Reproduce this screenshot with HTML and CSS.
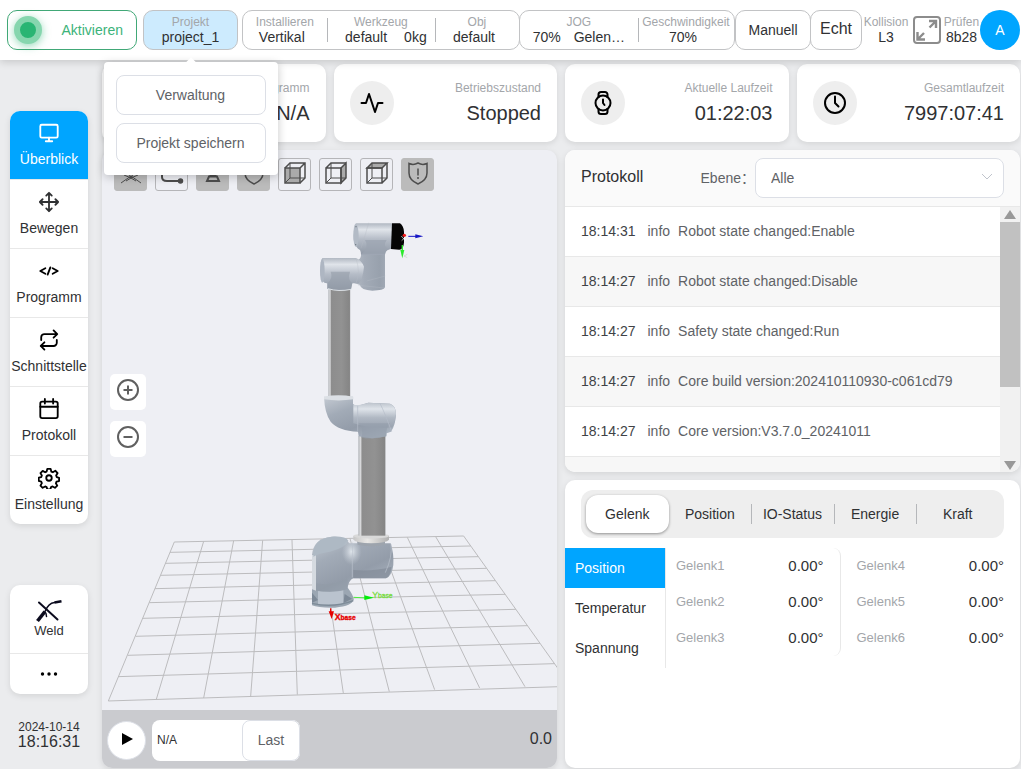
FILE: index.html
```html
<!DOCTYPE html>
<html lang="de">
<head>
<meta charset="utf-8">
<meta name="viewport" content="width=device-width, initial-scale=1">
<title>Roboter – Überblick</title>
<link rel="stylesheet" href="styles.css">
</head>
<body>
<header class="topbar">
  <button class="enable-btn" type="button"><span class="lamp"></span><span class="enable-text">Aktivieren</span></button>
  <div class="project">
    <button class="box project-btn" type="button" aria-expanded="true"><span class="label">Projekt</span><span class="value">project_1</span></button>
    <div class="popover">
      <button class="popover-btn" type="button">Verwaltung</button>
      <button class="popover-btn" type="button">Projekt speichern</button>
    </div>
  </div>
  <div class="box group group-setup">
    <div class="cell"><span class="label">Installieren</span><span class="value value-left">Vertikal</span></div>
    <div class="cell cell-wide"><span class="label">Werkzeug</span><span class="value pair pair-tool"><span>default</span><span>0kg</span></span></div>
    <div class="cell"><span class="label">Obj</span><span class="value value-left">default</span></div>
  </div>
  <div class="box group group-jog">
    <div class="cell cell-wide"><span class="label">JOG</span><span class="value pair pair-tight"><span>70%</span><span>Gelen…</span></span></div>
    <div class="cell cell-speed"><span class="label">Geschwindigkeit</span><span class="value value-left">70%</span></div>
  </div>
  <button class="box mode-btn" type="button">Manuell</button>
  <button class="box real-btn" type="button">Echt</button>
  <div class="cell status"><span class="label">Kollision</span><span class="value">L3</span></div>
  <button class="expand-btn" type="button" aria-label="Vollbild">
    <svg viewBox="0 0 30 30" width="30" height="30" fill="none" stroke="#8c8c8c" stroke-width="2"><rect x="2" y="2" width="26" height="26" rx="3"/><path d="M17.500 12.500 23.500 6.500M17 6h7v7M12 18l-6.500 6.500M5.500 17v7.500h7.500" stroke-width="2.400"/></svg>
  </button>
  <div class="cell check"><span class="label">Prüfen</span><span class="value">8b28</span></div>
  <button class="avatar" type="button">A</button>
</header>

<div class="layout">
  <aside class="sidebar">
    <nav class="nav card">
      <a class="nav-item active" href="#"><svg class="ico" viewBox="0 0 24 24"><rect x="2.500" y="3" width="19" height="14" rx="1.500"/><path d="M12 17v4M8.500 21h7"/></svg><span>Überblick</span></a>
      <a class="nav-item" href="#"><svg class="ico soft" viewBox="0 0 24 24"><path d="M12 2v20M2 12h20M9 5l3-3 3 3M9 19l3 3 3-3M5 9l-3 3 3 3M19 9l3 3-3 3"/></svg><span>Bewegen</span></a>
      <a class="nav-item" href="#"><svg class="ico" viewBox="0 0 24 24"><path d="M8 9l-5.500 3L8 15M16 9l5.500 3-5.500 3M13.500 8l-3 8"/></svg><span>Programm</span></a>
      <a class="nav-item" href="#"><svg class="ico" viewBox="0 0 24 24"><path d="M17 1.500l4 4-4 4M3.500 12V9a3.500 3.500 0 0 1 3.500-3.500h14M7 22.500l-4-4 4-4M20.500 12v3a3.500 3.500 0 0 1-3.500 3.500H3"/></svg><span>Schnittstelle</span></a>
      <a class="nav-item" href="#"><svg class="ico" viewBox="0 0 24 24"><rect x="2.500" y="4" width="19" height="18" rx="2"/><path d="M7.500 1v5M16.500 1v5M2.500 9.500h19"/></svg><span>Protokoll</span></a>
      <a class="nav-item" href="#"><svg class="ico" viewBox="0 0 24 24"><circle cx="12" cy="12" r="3"/><path d="M10.200 2h3.600l.7 3 1.700.7 2.700-1.600 2.500 2.500-1.600 2.700.7 1.700 2.500.8v3.500l-2.800.7-.7 1.700 1.500 2.600-2.500 2.400-2.600-1.500-1.700.7-.7 2.600h-3.300l-.8-2.600-1.600-.7-2.700 1.500-2.400-2.400 1.500-2.700-.7-1.600-2.700-.8v-3.500l2.700-.7.7-1.700-1.500-2.600 2.400-2.500 2.700 1.500 1.600-.7z"/></svg><span>Einstellung</span></a>
    </nav>
    <div class="plugins card">
      <a class="plugin" href="#"><svg viewBox="0 0 28 24" width="28" height="24" fill="none" stroke="#0b0b1e" stroke-linecap="round"><path d="M4 3.500l18.500 17" stroke-width="2"/><path d="M2.500 22 10 12.500" stroke-width="3.600" stroke-linecap="butt"/><path d="M10 12.500C12 7.500 15 4 19.500 3.500" stroke-width="1.500"/><path d="M19.500 3.500l7-1.200" stroke-width="2.600" stroke-linecap="butt"/><path d="M11.500 17.500l-.5-3" stroke-width="1.500"/></svg><span>Weld</span></a>
      <button class="more" type="button" aria-label="Mehr"><svg viewBox="0 0 18 4" width="18" height="4"><circle cx="2.500" cy="2" r="1.700"/><circle cx="9" cy="2" r="1.700"/><circle cx="15.500" cy="2" r="1.700"/></svg></button>
    </div>
    <div class="clock"><span class="date">2024-10-14</span><span class="time">18:16:31</span></div>
  </aside>

  <main class="content">
    <section class="stats">
      <div class="stat card"><span class="stat-icon"></span><div class="stat-text"><span class="label">Programm</span><span class="stat-value">N/A</span></div></div>
      <div class="stat card"><span class="stat-icon"><svg class="ico" viewBox="0 0 24 24"><path d="M1.500 12H6l3-9 6 18 3-9h4.500"/></svg></span><div class="stat-text"><span class="label">Betriebszustand</span><span class="stat-value">Stopped</span></div></div>
      <div class="stat card"><span class="stat-icon"><svg class="ico" viewBox="0 0 24 24"><circle cx="12" cy="12" r="7.500"/><path d="M12 8.500V12l1.500 2M7.500 6V3.500a2.500 2.500 0 0 1 2.500-2.500h4a2.500 2.500 0 0 1 2.500 2.500V6M7.500 18v2.500a2.500 2.500 0 0 0 2.500 2.500h4a2.500 2.500 0 0 0 2.500-2.500V18"/></svg></span><div class="stat-text"><span class="label">Aktuelle Laufzeit</span><span class="stat-value">01:22:03</span></div></div>
      <div class="stat card"><span class="stat-icon"><svg class="ico" viewBox="0 0 24 24"><circle cx="12" cy="12" r="10"/><path d="M12 5.500V12l3.500 3.500"/></svg></span><div class="stat-text"><span class="label">Gesamtlaufzeit</span><span class="stat-value">7997:07:41</span></div></div>
    </section>

    <section class="panels">
      <div class="viewer card">
        <div class="stage">
          <svg class="scene" viewBox="102 150 455 560" preserveAspectRatio="xMidYMid slice" role="img" aria-label="Roboterarm">
            <defs>
              <linearGradient id="cyl" x1="0" y1="0" x2="0" y2="1"><stop offset="0" stop-color="#b1b8c2"/><stop offset=".2" stop-color="#e0e4ea"/><stop offset=".5" stop-color="#b5bcc7"/><stop offset="1" stop-color="#8f98a5"/></linearGradient>
              <linearGradient id="post" x1="0" y1="0" x2="1" y2="0"><stop offset="0" stop-color="#b3bac4"/><stop offset=".3" stop-color="#a3abb7"/><stop offset=".7" stop-color="#98a1ad"/><stop offset="1" stop-color="#a8b0bc"/></linearGradient>
              <linearGradient id="tube" x1="0" y1="0" x2="1" y2="0"><stop offset="0" stop-color="#b2b5b9"/><stop offset=".08" stop-color="#d8d9db"/><stop offset=".14" stop-color="#8d8d8d"/><stop offset=".6" stop-color="#929292"/><stop offset=".96" stop-color="#858585"/><stop offset="1" stop-color="#b4b6b9"/></linearGradient>
              <linearGradient id="bend" x1="0" y1="0" x2=".7" y2="1"><stop offset="0" stop-color="#c5cbd3"/><stop offset=".35" stop-color="#a2abb7"/><stop offset=".7" stop-color="#939ca9"/><stop offset="1" stop-color="#a9b3bf"/></linearGradient>
              <linearGradient id="ring" x1="0" y1="0" x2="1" y2="0"><stop offset="0" stop-color="#c7c7c7"/><stop offset=".4" stop-color="#e9e8e6"/><stop offset="1" stop-color="#b0b0b0"/></linearGradient>
              <linearGradient id="sleeve" x1="0" y1="0" x2="0" y2="1"><stop offset="0" stop-color="#bcc3cc"/><stop offset=".25" stop-color="#dfe4ea"/><stop offset=".6" stop-color="#b0b8c3"/><stop offset="1" stop-color="#99a2af"/></linearGradient>
              <radialGradient id="shine"><stop offset="0" stop-color="#e2e8ee"/><stop offset="1" stop-color="#c5ccd5" stop-opacity="0"/></radialGradient>
            </defs>
            <g transform="translate(100 520) scale(.3333)" fill="none" stroke="#bcbcbe" stroke-width="3">
              <path d="M223 66 25 543M311 64 169 538M401 62 311 534M488 61 452 529M576 59 592 524M663 57 730 519M750 55 868 515M837 53 1004 509M922 52 1139 504M1007 50 1275 500M1091 48 1412 499"/>
              <path d="M223 66 1091 48M210 97 1112 78M196 130 1135 110M182 166 1160 145M165 206 1186 182M148 248 1216 223M128 295 1248 268M107 349 1283 317M83 406 1320 370M54 470 1364 431M25 543 1412 499"/>
            </g>
            <g transform="translate(290 390) scale(.3333)">
              <path d="M66 600 172 592 Q190 615 191 628 Q188 648 135 653 Q85 654 66 646Z" fill="#9ba6b2"/>
              <path d="M66 608 84 630 66 638ZM164 612 186 626 160 640Z" fill="#7d8997"/>
              <path d="M84 600H160V640Q120 650 84 642Z" fill="#bac3ce"/>
              <path d="M66 640Q130 655 190 632" fill="none" stroke="#7d8b98" stroke-width="4"/>
              <path d="M175 460H302Q312 490 310 525Q306 558 288 565H190Q176 570 172 598Q130 610 66 600V495Q70 445 125 440Q165 438 178 460Z" fill="url(#bend)"/>
              <path d="M66 495H78V602L66 598Z" fill="#d5dae0"/>
              <path d="M78 602Q130 612 172 598V565Q130 590 78 580Z" fill="#919ba7" opacity=".6"/>
              <path d="M70 500Q67 445 125 440 168 438 175 452 168 472 120 485 85 490 70 500Z" fill="#aeb9c4"/>
              <path d="M190 540Q250 545 305 530 300 562 288 565H190Z" fill="#838c98" opacity=".7"/>
              <ellipse cx="185" cy="485" rx="30" ry="40" fill="url(#shine)"/>
              <path d="M187 458V562M303 462Q308 500 286 548" fill="none" stroke="#b9c1cb" stroke-width="2"/>
              <path d="M200 450H285V465Q245 474 203 464Z" fill="#9da4ad"/>
              <path d="M190 437H297V449Q290 459 244 460 198 459 190 449Z" fill="url(#ring)"/>
              <ellipse cx="244" cy="438" rx="53" ry="8" fill="#d9d9d9"/>
              <rect x="205" y="138" width="82" height="299" fill="url(#tube)"/>
              <path d="M102 20H189V42Q198 50 212 45L235 38 300 41Q318 47 318 72 316 108 303 125L290 130 289 139Q246 150 206 139L204 125Q145 122 122 95 104 70 102 20Z" fill="url(#bend)"/>
              <path d="M190 44Q205 48 235 38L300 41Q318 47 318 72 316 92 308 112 250 118 190 100Z" fill="url(#sleeve)"/>
              <path d="M215 143Q222 115 205 100H300Q287 115 289 139Q250 150 215 143Z" fill="#929caa" opacity=".6"/>
              <path d="M203 48V124M270 40Q285 70 305 125" fill="none" stroke="#b5bdc8" stroke-width="2"/>
              <path d="M191 622 228 624" stroke="#4bef3d" stroke-width="3"/><path d="M223 616 252 623 223 630Z" fill="#00ed08"/>
              <path d="M122 655V668" stroke="#e00" stroke-width="4"/><path d="M116 664H132L125 687Z" fill="#e60000"/>
              <text class="axis axis-x" x="134" y="690">X<tspan class="sub">base</tspan></text>
              <text class="axis axis-y" x="247" y="625">Y<tspan class="sub">base</tspan></text>
            </g>
            <g transform="translate(290 200) scale(.3333)">
              <rect x="115" y="268" width="66" height="322" fill="url(#tube)"/>
              <path d="M102 590Q145 582 190 590V598Q145 605 102 598Z" fill="#dce0e5"/>
              <path d="M215 140 204 100H303L300 147Q287 148 285 160V262Q282 272 247 272 212 270 210 255L190 248V182Q210 184 213 168Z" fill="url(#post)"/>
              <path d="M97 174H198Q214 180 222 200 218 240 206 250H187L183 268Q148 274 112 266V250Q96 252 92 225 88 185 97 174Z" fill="url(#cyl)"/>
              <path d="M112 250Q130 235 122 215H180Q172 240 187 250L183 268Q148 274 112 266Z" fill="#949da9" opacity=".6"/>
              <ellipse cx="97" cy="212" rx="7" ry="36" fill="#aeb6c2"/>
              <path d="M198 70H306V147H300Q285 150 285 164H213Q213 148 204 146 190 134 190 105 190 74 198 70Z" fill="url(#cyl)"/>
              <path d="M213 164Q240 140 225 120H290Q275 140 300 148 287 150 285 164Z" fill="#9ba4b0" opacity=".7"/>
              <ellipse cx="198" cy="107" rx="8" ry="34" fill="#b3bbc6"/><circle cx="198" cy="80" r="2" fill="#6a727c"/><circle cx="197" cy="134" r="2" fill="#6a727c"/>
              <path d="M236 68Q225 110 213 145M198 176Q212 215 198 250M230 243 286 228M213 163H284M205 256 283 264" fill="none" stroke="#b5bcc6" stroke-width="1"/>
              <path d="M114 266Q145 276 184 268" fill="none" stroke="#dce1e6" stroke-width="3"/>
              <path d="M306 70H330Q341 78 342 95V128Q340 148 328 149L303 147Z" fill="#050505"/>
              <path d="M355 109H380" stroke="#1414c8" stroke-width="3"/><path d="M376 103 400 109 376 115Z" fill="#1717c4"/>
              <path d="M337 135V155" stroke="#2bea2b" stroke-width="4"/><path d="M331 150H343L337 175Z" fill="#2bea2b"/>
              <circle cx="343" cy="106" r="5" fill="#f01818"/><path d="M334 108 346 122M345 112 335 122" stroke="#fff" stroke-width="2"/><path d="M352 163 342 168 352 173" fill="none" stroke="#c5d2c5" stroke-width="2"/>
            </g>
          </svg>
          <div class="tools">
            <button class="tool on" type="button" aria-label="Raster"><svg class="thin" viewBox="0 0 24 24"><path d="M2 22 12 15l10 7M5 14l7 3 7-3M9 11l3 6 3-6M7 20l5-3 5 3"/></svg></button>
            <button class="tool" type="button" aria-label="Bahn"><svg viewBox="0 0 24 24"><path d="M2 8v8q0 4 5 4h14" stroke-width="2"/><circle cx="20.500" cy="20" r="2" fill="#4d4d4d"/></svg></button>
            <button class="tool on" type="button" aria-label="Modell"><svg viewBox="0 0 24 24"><path d="M8 5h8v6l-2 4h-4l-2-4zM8 15.500h8l2 4.500H6z" stroke-width="2"/></svg></button>
            <button class="tool on" type="button" aria-label="Sicherheit"><svg viewBox="0 0 24 24"><path d="M12 2l9 4v6q0 7-9 11-9-4-9-11V6z"/></svg></button>
            <button class="tool" type="button" aria-label="Vorderansicht"><svg viewBox="0 0 24 24"><path d="M2 7h15v15H2z" fill="#aaa"/><path d="M2 7l5-5h15v15l-5 5M17 7l5-5"/><path class="thin" d="M7 2v15h15M2 22l5-5"/></svg></button>
            <button class="tool" type="button" aria-label="Seitenansicht"><svg viewBox="0 0 24 24"><path d="M17 7l5-5v15l-5 5z" fill="#aaa"/><path d="M2 7h15v15H2zM2 7l5-5h15"/><path class="thin" d="M7 2v15h15M2 22l5-5"/></svg></button>
            <button class="tool" type="button" aria-label="Draufsicht"><svg viewBox="0 0 24 24"><path d="M2 7l5-5h15l-5 5z" fill="#aaa"/><path d="M2 7h15v15H2zM22 2v15l-5 5"/><path class="thin" d="M7 2v15h15M2 22l5-5"/></svg></button>
            <button class="tool on" type="button" aria-label="Warnung"><svg viewBox="0 0 24 24"><path d="M3 2.500q4.500 2 9-.5 4.500 2.500 9 .5V12q0 7-9 11-9-4-9-11zM12 7.500v7M12 16v2"/></svg></button>
          </div>
          <div class="zoomers">
            <button class="zoom-btn" type="button" aria-label="Vergrößern"><svg viewBox="0 0 24 24"><circle cx="12" cy="12" r="10"/><path d="M12 7.500v9M7.500 12h9"/></svg></button>
            <button class="zoom-btn" type="button" aria-label="Verkleinern"><svg viewBox="0 0 24 24"><circle cx="12" cy="12" r="10"/><path d="M7.500 12h9"/></svg></button>
          </div>
        </div>
        <div class="player">
          <button class="play" type="button" aria-label="Start"><svg viewBox="0 0 12 12" width="12" height="12"><path d="M1 0 12 6 1 12z"/></svg></button>
          <div class="program"><span class="program-name">N/A</span><button class="last-btn" type="button">Last</button></div>
          <span class="elapsed">0.0</span>
        </div>
      </div>

      <div class="side">
        <section class="log card">
          <div class="log-head">
            <h2 class="log-title">Protokoll</h2>
            <label class="log-label" for="level">Ebene：</label>
            <div class="select-wrap">
              <select id="level" class="select"><option>Alle</option></select>
              <svg class="chevron" viewBox="0 0 12 8" width="12" height="8" fill="none" stroke="#c0c4cc"><path d="M1 1l5 5 5-5"/></svg>
            </div>
          </div>
          <div class="log-body">
            <ol class="log-list">
              <li class="log-row"><time>18:14:31</time><span class="level">info</span><span>Robot state changed:Enable</span></li>
              <li class="log-row"><time>18:14:27</time><span class="level">info</span><span>Robot state changed:Disable</span></li>
              <li class="log-row"><time>18:14:27</time><span class="level">info</span><span>Safety state changed:Run</span></li>
              <li class="log-row"><time>18:14:27</time><span class="level">info</span><span>Core build version:202410110930-c061cd79</span></li>
              <li class="log-row"><time>18:14:27</time><span class="level">info</span><span>Core version:V3.7.0_20241011</span></li>
              <li class="log-row"></li>
            </ol>
            <div class="scrollbar" aria-hidden="true">
              <svg viewBox="0 0 12 9" width="12" height="9"><path d="M6 0l6 9H0z"/></svg>
              <div class="track"><div class="thumb"></div></div>
              <svg viewBox="0 0 12 9" width="12" height="9"><path d="M0 0h12L6 9z"/></svg>
            </div>
          </div>
        </section>

        <section class="info card">
          <div class="tabs" role="tablist">
            <button class="tab current" type="button" role="tab" aria-selected="true">Gelenk</button>
            <button class="tab" type="button" role="tab">Position</button>
            <button class="tab ruled" type="button" role="tab">IO-Status</button>
            <button class="tab ruled" type="button" role="tab">Energie</button>
            <button class="tab ruled" type="button" role="tab">Kraft</button>
          </div>
          <div class="joints">
            <div class="kinds">
              <button class="kind chosen" type="button">Position</button>
              <button class="kind" type="button">Temperatur</button>
              <button class="kind" type="button">Spannung</button>
            </div>
            <dl class="values values-first">
              <div class="row"><dt>Gelenk1</dt><dd>0.00°</dd></div>
              <div class="row"><dt>Gelenk2</dt><dd>0.00°</dd></div>
              <div class="row"><dt>Gelenk3</dt><dd>0.00°</dd></div>
            </dl>
            <dl class="values">
              <div class="row"><dt>Gelenk4</dt><dd>0.00°</dd></div>
              <div class="row"><dt>Gelenk5</dt><dd>0.00°</dd></div>
              <div class="row"><dt>Gelenk6</dt><dd>0.00°</dd></div>
            </dl>
          </div>
        </section>
      </div>
    </section>
  </main>
</div>
</body>
</html>
```
FILE: styles.css
```css
* { box-sizing: border-box; }
body {
  margin: 0;
  height: 100vh;
  display: flex;
  flex-direction: column;
  overflow: hidden;
  background: #ebecee;
  color: #303133;
  font: 14px/16px "Liberation Sans", "Noto Sans CJK SC", sans-serif;
}
button, select { font: inherit; color: inherit; padding: 0; margin: 0; border: 0; background: none; }
a { color: inherit; text-decoration: none; }
svg { display: block; }
.card { background: #fff; border-radius: 10px; box-shadow: 0 2px 6px rgba(0, 0, 0, .1); }
.label { font-size: 12px; line-height: 14px; color: #a3a6aa; white-space: nowrap; }

/* Top bar */
.topbar {
  position: relative;
  z-index: 2;
  flex: none;
  display: flex;
  height: 60px;
  padding: 10px 1px 10px 7px;
  background: #fff;
  box-shadow: 0 2px 8px rgba(0, 0, 0, .16);
}
.box { border: 1px solid #c2c3c5; border-radius: 10px; background: #fff; }
.enable-btn {
  display: flex;
  align-items: center;
  width: 130px;
  margin-right: 6px;
  padding: 0 13px 0 6px;
  border: 1px solid #41a877;
  border-radius: 10px;
  color: #3cb37a;
}
.lamp {
  width: 28px;
  height: 28px;
  border: 6px solid #86d6ae;
  border-radius: 50%;
  background: #29b573;
  box-shadow: 0 2px 8px rgba(41, 181, 115, .5);
}
.enable-text { margin-left: auto; }
.project { position: relative; display: flex; margin-right: 4px; }
.project-btn, .cell { display: flex; flex-direction: column; align-items: center; justify-content: center; padding-bottom: 1px; }
.project-btn { width: 95px; background: #cdebfe; }
.popover {
  position: absolute;
  top: 52px;
  left: 50%;
  transform: translateX(-50%);
  display: flex;
  flex-direction: column;
  gap: 8px;
  width: 174px;
  padding: 13px 12px 12px;
  border-radius: 4px;
  background: #fff;
  box-shadow: 0 2px 10px rgba(0, 0, 0, .22);
}
.popover::before {
  content: "";
  position: absolute;
  top: -3px;
  left: 50%;
  width: 8px;
  height: 8px;
  background: #fff;
  transform: translateX(-50%) rotate(45deg);
}
.popover-btn { position: relative; height: 40px; border: 1px solid #dcdfe6; border-radius: 8px; color: #606266; }
.group { display: flex; }
.group-setup { flex: 278 1 0; }
.group-jog { flex: 216 1 0; margin-left: -1px; }
.group .cell { position: relative; flex: 84 1 0; }
.group .cell-wide { flex-grow: 109; }
.group-jog .cell-wide { flex-grow: 118; }
.group .cell-speed { flex-grow: 96; }
.group .cell + .cell::before { content: ""; position: absolute; left: 0; top: 7px; height: 24px; border-left: 1px solid #b5b7ba; }
.value { white-space: nowrap; }
.value-left { margin-right: 6px; }
.pair { display: flex; gap: 17px; }
.pair-tool { margin-left: 10px; }
.pair-tight { gap: 13px; }
.mode-btn { width: 76px; }
.real-btn { width: 52px; margin-left: -1px; padding-bottom: 2px; font-size: 16px; }
.status { width: 48px; }
.expand-btn { width: 33px; padding-left: 2px; }
.check { width: 37px; }
.avatar { width: 40px; height: 40px; border-radius: 50%; background: #00a5ff; color: #fff; }

/* Page frame */
.layout { flex: 1; min-height: 0; display: flex; padding-bottom: 1px; }
.sidebar { flex: none; width: 102px; display: flex; flex-direction: column; padding: 51px 14px 18px 10px; }
.content { flex: 1; min-width: 0; display: flex; flex-direction: column; gap: 8px; padding: 4px 1px 0 0; }

/* Sidebar */
.nav { overflow: hidden; }
.nav-item {
  display: flex;
  flex-direction: column;
  align-items: center;
  gap: 7px;
  height: 69px;
  padding-top: 11px;
  border-bottom: 1px solid #e8e8e8;
}
.nav-item:last-child { height: 68px; border-bottom: 0; }
.active { background: #00a5ff; color: #fff; }
.ico { width: 22px; height: 22px; fill: none; stroke: #000; stroke-width: 2; stroke-linecap: round; stroke-linejoin: round; }
.active .ico { stroke: #fff; }
.soft { stroke: #303133; }
.plugins { margin-top: auto; }
.plugin {
  display: flex;
  flex-direction: column;
  align-items: center;
  height: 69px;
  padding-top: 14px;
  border-bottom: 1px solid #e8e8e8;
  font-size: 13px;
}
.more { display: flex; align-items: center; justify-content: center; width: 100%; height: 40px; }
.clock { display: flex; flex-direction: column; align-items: center; margin-top: 26px; }
.date { font-size: 12px; line-height: 14px; }
.time { font-size: 16px; line-height: 16px; }

/* Stat cards */
.stats { flex: none; display: grid; grid-template-columns: repeat(4, minmax(0, 1fr)); gap: 8px; }
.stat { display: flex; align-items: center; justify-content: space-between; height: 78px; padding: 0 16px; }
.stat-icon { display: flex; align-items: center; justify-content: center; width: 44px; height: 44px; border-radius: 50%; background: #eee; }
.stat-icon .ico { width: 24px; height: 24px; }
.stat-text { display: flex; flex-direction: column; align-items: flex-end; gap: 6px; }
.stat-value { font-size: 20px; line-height: 24px; }

/* Panels */
.panels { flex: 1; min-height: 0; display: grid; grid-template-columns: repeat(2, minmax(0, 1fr)); gap: 8px; }
.viewer { display: flex; flex-direction: column; min-height: 0; overflow: hidden; background: #eeeff4; }
.stage { position: relative; flex: 1; min-height: 0; }
.scene { width: 100%; height: 100%; }
.axis { font: bold 26px "Liberation Sans", sans-serif; stroke-width: 1; }
.axis-x { fill: #e60000; stroke: #e60000; }
.axis-y { fill: #7bdc45; stroke: #7bdc45; font-weight: normal; }
.sub { font-size: 20px; }
.tools { position: absolute; top: 8px; left: 12px; display: flex; gap: 8px; }
.tool { display: flex; align-items: center; justify-content: center; width: 33px; height: 33px; padding-bottom: 3px; border: 1px solid #b5b5b8; border-radius: 3px; }
.tool.on { background: #bbb; border-color: #bbb; }
.tool svg { width: 24px; height: 24px; fill: none; stroke: #4d4d4d; stroke-width: 1.5; }
.tool .thin { stroke-width: 1; }
.zoomers { position: absolute; left: 8px; top: 40%; display: flex; flex-direction: column; gap: 11px; }
.zoom-btn { display: flex; align-items: center; justify-content: center; width: 36px; height: 36px; padding-bottom: 4px; border-radius: 5px; background: #fff; }
.zoom-btn svg { width: 24px; height: 24px; fill: none; stroke: #606060; stroke-width: 2; }
.player { flex: none; display: flex; align-items: center; gap: 6px; height: 58px; padding: 2px 5px 0; background: #cacbcf; }
.play { display: flex; align-items: center; justify-content: center; width: 39px; height: 39px; padding-bottom: 2px; border-radius: 50%; border: 1px solid #dcdfe6; background: #fff; }
.program { display: flex; align-items: center; justify-content: space-between; width: 148px; height: 41px; padding-left: 5px; border-radius: 8px; background: #fff; }
.program-name { font-size: 12px; }
.last-btn { align-self: stretch; width: 58px; border: 1px solid #dcdfe6; border-radius: 8px; color: #606266; }
.elapsed { margin-left: auto; padding-bottom: 2px; font-size: 16px; }
.side { display: grid; grid-template-rows: 19fr 17fr; gap: 8px; min-height: 0; }

/* Log */
.log { display: flex; flex-direction: column; min-height: 0; overflow: hidden; }
.log-head { flex: none; display: flex; align-items: center; height: 57px; padding: 0 16px; border-bottom: 1px solid #e8e8e8; background: #fafafa; }
.log-title { margin: 0 auto 3px 0; font-size: 16px; font-weight: normal; }
.log-label { color: #606266; }
.select-wrap { position: relative; width: 249px; }
.select { appearance: none; width: 100%; height: 40px; padding: 0 32px 0 15px; border: 1px solid #dcdfe6; border-radius: 8px; background: #fff; color: #606266; }
.chevron { position: absolute; right: 11px; top: 15px; pointer-events: none; }
.log-body { flex: 1; min-height: 0; display: flex; }
.log-list { flex: 1; margin: 0; padding: 0; list-style: none; overflow: hidden; }
.log-row { display: flex; align-items: center; height: 50px; padding: 0 16px 2px; border-bottom: 1px solid #e8e8e8; color: #606266; }
.log-row:nth-child(even) { background: #f7f7f7; }
.log-row time { color: #404246; }
.level { margin: 0 8px 0 12px; }
.scrollbar { flex: none; display: flex; flex-direction: column; align-items: center; gap: 3px; width: 20px; padding: 3px 0 2px; background: #f1f1f1; fill: #989898; }
.track { flex: 1; align-self: stretch; }
.thumb { height: 70%; background: #c1c1c1; }

/* Joint data */
.info { padding: 10px 0; }
.tabs { display: flex; margin: 0 16px 10px; padding: 5px; border-radius: 12px; background: #eee; }
.tab { position: relative; flex: 1 1 0; height: 38px; border-radius: 12px; white-space: nowrap; }
.current { background: #fff; box-shadow: 0 1px 3px rgba(0, 0, 0, .4); }
.ruled::before { content: ""; position: absolute; left: 0; top: 9px; height: 20px; border-left: 1px solid #b5b7ba; }
.joints { display: flex; align-items: flex-start; }
.kinds { flex: none; width: 101px; border-right: 1px solid #e8e8e8; }
.kind { display: block; width: 100%; height: 40px; padding-left: 10px; text-align: left; }
.chosen { background: #00a5ff; color: #fff; }
.values { box-sizing: content-box; flex: 1 1 0; margin: 0; padding: 0 16px; }
.values-first { padding-left: 10px; border-right: 1px solid #e8e8e8; border-radius: 8px; }
.row { display: flex; align-items: center; justify-content: space-between; height: 36px; padding-top: 1px; }
.row dt { font-size: 13px; color: #a3a6aa; }
.row dd { margin: 0; font-size: 15px; }
```
